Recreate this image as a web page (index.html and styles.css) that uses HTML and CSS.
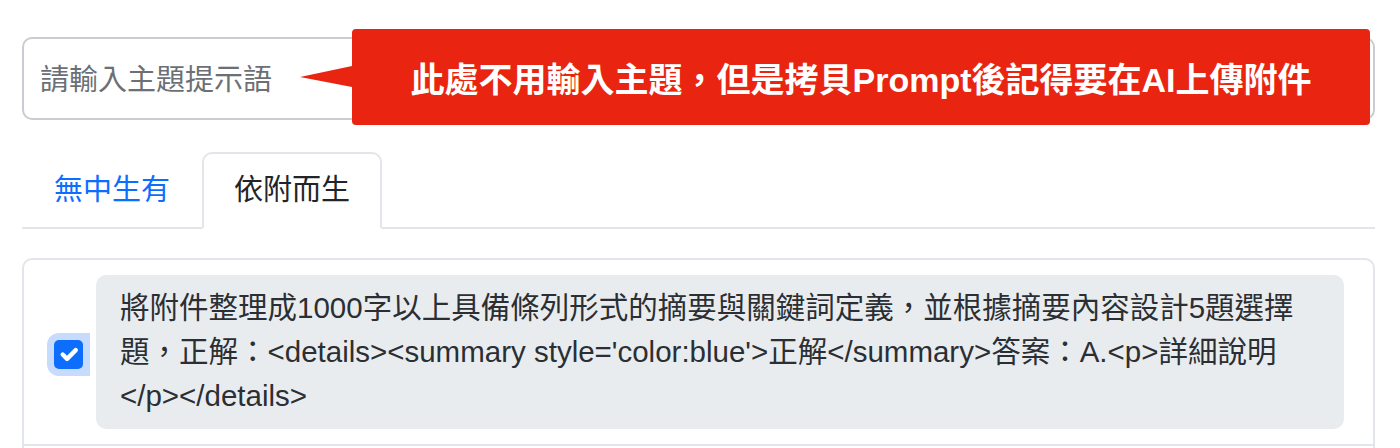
FILE: index.html
```html
<!DOCTYPE html>
<html lang="zh-Hant">
<head>
  <meta charset="UTF-8" />
  <meta name="viewport" content="width=device-width, initial-scale=1" />
  <title>Prompt</title>
  <link rel="stylesheet" href="styles.css">
</head>
<body>
  <main class="page">
    <div class="topic">
      <input type="text" class="topic-input" placeholder="請輸入主題提示語" />
      <!-- hint bubble sits over the input -->
      <div class="topic-tip">此處不用輸入主題，但是拷貝Prompt後記得要在AI上傳附件</div>
    </div>

    <ul class="tabs">
      <li><a class="tab-link" href="#">無中生有</a></li>
      <li><a class="tab-link active" href="#">依附而生</a></li>
    </ul>

    <ul class="prompt-list">
      <li class="prompt-item">
        <span class="check-ring">
          <span class="check-box">
            <svg width="29" height="29" viewBox="0 0 20 20">
              <path d="m6 10 3 3 6-6" fill="none" stroke="#fff" stroke-width="3" stroke-linecap="round" stroke-linejoin="round" />
            </svg>
          </span>
        </span>
        <p class="prompt-text">將附件整理成1000字以上具備條列形式的摘要與關鍵詞定義，並根據摘要內容設計5題選擇題，正解：&lt;details&gt;&lt;summary style='color:blue'&gt;正解&lt;/summary&gt;答案：A.&lt;p&gt;詳細說明&lt;/p&gt;&lt;/details&gt;</p>
      </li>
      <li class="prompt-item empty"></li>
    </ul>
  </main>
</body>
</html>
```

FILE: styles.css
```css
:root {
  --blue: #0d6efd;
  --red: #e92512;
  --dark: #212529;
  --border: #e2e5e9;
  --grey-bg: #e9ecef;
}

body {
  margin: 0;
  overflow: hidden;
  background: #ffffff;
  color: var(--dark);
  font-family: "Liberation Sans", "Noto Sans CJK TC", sans-serif;
}

.page {
  padding: 37px 25px 0 22px;
}

/* topic input + red hint */
.topic {
  position: relative;
}

.topic-input {
  display: block;
  width: 100%;
  height: 83px;
  box-sizing: border-box;
  padding: 3px 16px 0;
  font-family: inherit;
  font-size: 29px;
  color: var(--dark);
  border: 2px solid #c9cdd1;
  border-radius: 10px;
}

.topic-input::placeholder {
  color: #6c7075;
}

.topic-tip {
  position: absolute;
  top: -8px;
  left: 330px;
  right: 5px;
  height: 96px;
  display: flex;
  align-items: center;
  justify-content: center;
  background: var(--red);
  color: #ffffff;
  font-size: 34px;
  font-weight: bold;
  border-radius: 4px;
}

.topic-tip::before {
  content: "";
  position: absolute;
  left: -52px;
  top: 50%;
  margin-top: -11px;
  border-right: 52px solid var(--red);
  border-top: 11px solid transparent;
  border-bottom: 10px solid transparent;
}

/* tabs */
.tabs {
  display: flex;
  list-style: none;
  margin: 32px 0 0;
  padding: 0;
  border-bottom: 2px solid var(--border);
}

.tab-link {
  display: block;
  padding: 14px 30px 15px;
  margin-bottom: -2px;
  font-size: 29px;
  line-height: 44px;
  color: var(--blue);
  text-decoration: none;
  border: 2px solid transparent;
  border-radius: 10px 10px 0 0;
}

.tab-link.active {
  color: var(--dark);
  background: #ffffff;
  border-color: var(--border) var(--border) #ffffff;
}

/* prompt card */
.prompt-list {
  list-style: none;
  margin: 29px 0 0;
  padding: 0;
  border: 2px solid var(--border);
  border-radius: 10px;
}

.prompt-item {
  display: flex;
  align-items: center;
  gap: 6px;
  padding: 15px 29px 15px 23px;
}

.prompt-item + .prompt-item {
  border-top: 2px solid var(--border);
}

.prompt-item.empty {
  height: 60px;
}

.check-ring {
  padding: 7px;
  margin-top: 5px;
  background: #c6dbfd;
  border-radius: 12px 0 0 12px;
}

.check-box {
  display: block;
  width: 29px;
  height: 29px;
  border-radius: 5px;
  background: var(--blue);
}

.check-box svg {
  display: block;
}

.prompt-text {
  flex: 1;
  margin: 0;
  padding: 11px 24px;
  background: var(--grey-bg);
  border-radius: 10px;
  font-size: 29.5px;
  line-height: 44px;
  color: #2b2f33;
}
```
